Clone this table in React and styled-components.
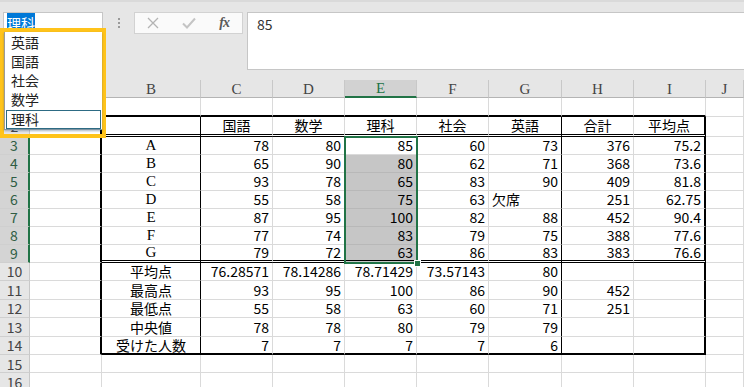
import React from 'react';
import styled, { createGlobalStyle } from 'styled-components';

const GlobalStyle = createGlobalStyle`
	html, body {
		margin: 0;
		padding: 0;
		background: #fff;
	}
	body {
		font-family: "Noto Sans CJK JP", "Noto Sans", sans-serif;
	}
`;

const Frame = styled.div`
	position: relative;
	width: 744px;
	height: 387px;
	overflow: hidden;
	background: #fff;
`;

const Toolbar = styled.div`
	display: flex;
	align-items: flex-start;
	height: 80px;
	box-sizing: border-box;
	padding: 12px 0 0 3px;
	background: #e6e6e6;
	border-top: 2px solid #dadada;
`;

const NameBox = styled.div`
	width: 100px;
	height: 22px;
	box-sizing: border-box;
	margin-top: -2px;
	padding: 1px 3px;
	background: #fff;
	border: 1px solid #c6c6c6;
	font-size: 14px;
	line-height: 18px;
`;

const Highlight = styled.span`
	background: #0078d7;
	color: #fff;
`;

const Grip = styled.div`
	width: 31px;
	height: 22px;
	margin-top: -2px;
	display: flex;
	flex-direction: column;
	align-items: center;
	justify-content: center;
	gap: 2px;
	span {
		width: 2px;
		height: 2px;
		background: #9a9a9a;
	}
`;

const ButtonGroup = styled.div`
	display: flex;
	width: 109px;
	height: 22px;
	box-sizing: border-box;
	margin-top: -2px;
	background: #fafafa;
	border: 1px solid #d2d2d2;
`;

const BarButton = styled.div`
	flex: 1;
	display: flex;
	align-items: center;
	justify-content: center;
	color: ${props => props.$color};
`;

const Fx = styled.span`
	font-family: "Liberation Serif", serif;
	font-style: italic;
	font-weight: bold;
	font-size: 14px;
	letter-spacing: -1px;
	color: #5a5a5a;
`;

const FormulaInput = styled.div`
	flex: 1;
	height: 58px;
	box-sizing: border-box;
	margin: -2px 0 0 4px;
	padding: 1px 9px;
	background: #fff;
	border: 1px solid #c6c6c6;
	border-right: none;
	font-size: 14px;
	line-height: 20px;
	color: #333;
`;

const Sheet = styled.div`
	display: grid;
	grid-template-columns: 30px 72px 99px 72px 72px 72px 72px 73px 72px 72px 1fr;
	grid-template-rows: 18px 18.5px 20px repeat(7, 18px) repeat(5, 18.5px) repeat(2, 18px);
	font-size: 14px;
	line-height: 16px;
`;

const Corner = styled.div`
	grid-row: 1;
	grid-column: 1;
	background: #e6e6e6;
	border-right: 1px solid #c8c8c8;
	border-bottom: 1px solid #b4b4b4;
`;

const ColHead = styled.div`
	grid-row: 1;
	grid-column: ${props => props.$col};
	box-sizing: border-box;
	display: flex;
	align-items: center;
	justify-content: center;
	background: ${props => (props.$sel ? '#d2d2d2' : '#e6e6e6')};
	color: ${props => (props.$sel ? '#217346' : '#444')};
	border-right: 1px solid #c8c8c8;
	border-bottom: ${props => (props.$sel ? '2px solid #217346' : '1px solid #b4b4b4')};
	font-family: "Liberation Serif", serif;
	font-size: 15px;
`;

const RowHead = styled.div`
	grid-row: ${props => props.$row};
	grid-column: 1;
	box-sizing: border-box;
	display: flex;
	align-items: center;
	justify-content: center;
	overflow: hidden;
	background: ${props => (props.$sel ? '#d4d4d4' : '#e6e6e6')};
	color: ${props => (props.$sel ? '#2f5d44' : '#444')};
	border-right: ${props => (props.$sel ? '2px solid #217346' : '1px solid #c8c8c8')};
	border-bottom: 1px solid #cfcfcf;
	font-size: 14px;
`;

const lines = {
	grid: '1px solid #dadada',
	shade: '1px solid #b8b8b8',
	thin: '1px solid #000',
	thick: '2px solid #000',
	double: '3px double #000',
};

const Cell = styled.div`
	grid-row: ${props => props.$row};
	grid-column: ${props => props.$col};
	box-sizing: border-box;
	display: flex;
	align-items: center;
	justify-content: ${props => props.$align};
	padding: 0 3px;
	white-space: nowrap;
	background: ${props => (props.$shade ? '#c6c6c6' : '#fff')};
	border-right: ${props => lines[props.$br]};
	border-bottom: ${props => lines[props.$bb]};
	font-family: ${props => (props.$serif ? '"Liberation Serif", serif' : '"Noto Sans CJK JP", sans-serif')};
	font-size: ${props => (props.$serif ? '15px' : '14px')};
	color: #000;
`;

const Selection = styled.div`
	grid-row: 4 / 11;
	grid-column: 6;
	position: relative;
	z-index: 2;
	margin: -1px;
	border: 2px solid #217346;
	pointer-events: none;
`;

const FillHandle = styled.div`
	position: absolute;
	right: -5px;
	bottom: -5px;
	width: 5px;
	height: 5px;
	background: #217346;
	border: 1px solid #fff;
`;

const Dropdown = styled.div`
	position: absolute;
	left: 0;
	top: 28px;
	width: 106px;
	height: 110px;
	box-sizing: border-box;
	border: 4px solid #ffc31a;
	z-index: 5;
`;

const List = styled.div`
	display: flex;
	flex-direction: column;
	height: 98px;
	box-sizing: border-box;
	padding: 1px 1px 0;
	background: #fff;
	border-left: 1px solid #9a9a9a;
	border-bottom: 1px solid #7f93a0;
	box-shadow: 0 1px 2px rgba(40, 70, 110, 0.4);
`;

const ListItem = styled.div`
	height: 19px;
	box-sizing: border-box;
	padding-left: ${props => (props.$active ? '4px' : '5px')};
	margin-top: ${props => (props.$active ? '1px' : '0')};
	border: ${props => (props.$active ? '1px solid #2d6b84' : 'none')};
	font-size: 14px;
	line-height: ${props => (props.$active ? '16px' : '19px')};
	color: #222;
`;

const columns = ['A', 'B', 'C', 'D', 'E', 'F', 'G', 'H', 'I', 'J'];

const data = {
	2: ['', '国語', '数学', '理科', '社会', '英語', '合計', '平均点'],
	3: ['A', '78', '80', '85', '60', '73', '376', '75.2'],
	4: ['B', '65', '90', '80', '62', '71', '368', '73.6'],
	5: ['C', '93', '78', '65', '83', '90', '409', '81.8'],
	6: ['D', '55', '58', '75', '63', '欠席', '251', '62.75'],
	7: ['E', '87', '95', '100', '82', '88', '452', '90.4'],
	8: ['F', '77', '74', '83', '79', '75', '388', '77.6'],
	9: ['G', '79', '72', '63', '86', '83', '383', '76.6'],
	10: ['平均点', '76.28571', '78.14286', '78.71429', '73.57143', '80', '', ''],
	11: ['最高点', '93', '95', '100', '86', '90', '452', ''],
	12: ['最低点', '55', '58', '63', '60', '71', '251', ''],
	13: ['中央値', '78', '78', '80', '79', '79', '', ''],
	14: ['受けた人数', '7', '7', '7', '7', '6', '', ''],
};

const subjects = ['英語', '国語', '社会', '数学', '理科'];

// row 1 is fully hidden under the dropdown, row 2 peeks out below it
const rowNumbers = Array.from({ length: 16 }, (_, i) => i + 1);

const inTable = c => c >= 1 && c <= 8;

const bottomLine = (r, c, shade) => {
	if (inTable(c) && (r === 1 || r === 14)) return 'thick';
	if (inTable(c) && (r === 2 || r === 9)) return 'double';
	return shade ? 'shade' : 'grid';
};

const rightLine = (r, c) => {
	if (r < 2 || r > 14) return 'grid';
	if (c === 0 || c === 8) return 'thick';
	if (c === 1 || c === 6) return 'thin';
	return 'grid';
};

const alignOf = value => {
	if (/^[\d.]+$/.test(value)) return 'flex-end';
	if (value === '欠席') return 'flex-start';
	return 'center';
};

const App = () => {
	return (
		<Frame>
			<GlobalStyle />
			<Toolbar>
				<NameBox><Highlight>理科</Highlight></NameBox>
				<Grip><span /><span /><span /></Grip>
				<ButtonGroup>
					<BarButton $color="#b4b4b4">
						<svg width="12" height="12" viewBox="0 0 12 12">
							<path d="M1 1 L11 11 M11 1 L1 11" stroke="currentColor" strokeWidth="1.3" fill="none" />
						</svg>
					</BarButton>
					<BarButton $color="#c4c4c4">
						<svg width="14" height="12" viewBox="0 0 14 12">
							<path d="M1 6.5 L5 10.5 L13 1.5" stroke="currentColor" strokeWidth="2" fill="none" />
						</svg>
					</BarButton>
					<BarButton>
						<Fx>fx</Fx>
					</BarButton>
				</ButtonGroup>
				<FormulaInput>85</FormulaInput>
			</Toolbar>

			<Sheet>
				<Corner />
				{columns.map((name, i) => (
					<ColHead key={name} $col={i + 2} $sel={name === 'E'}>{name}</ColHead>
				))}
				{rowNumbers.map(r => (
					<React.Fragment key={r}>
						<RowHead $row={r + 1} $sel={r >= 3 && r <= 9}>{r > 1 ? r : ''}</RowHead>
						{columns.map((name, c) => {
							const value = data[r] && c >= 1 && c <= 8 ? data[r][c - 1] : '';
							const shade = name === 'E' && r >= 4 && r <= 9;
							return (
								<Cell
									key={name}
									$row={r + 1}
									$col={c + 2}
									$shade={shade}
									$align={alignOf(value)}
									$serif={c === 1 && /^[A-G]$/.test(value)}
									$br={rightLine(r, c)}
									$bb={bottomLine(r, c, shade)}
								>
									{value}
								</Cell>
							);
						})}
					</React.Fragment>
				))}
				<Selection>
					<FillHandle />
				</Selection>
			</Sheet>

			<Dropdown>
				<List>
					{subjects.map(s => (
						<ListItem key={s} $active={s === '理科'}>{s}</ListItem>
					))}
				</List>
			</Dropdown>
		</Frame>
	);
};

export default App;
